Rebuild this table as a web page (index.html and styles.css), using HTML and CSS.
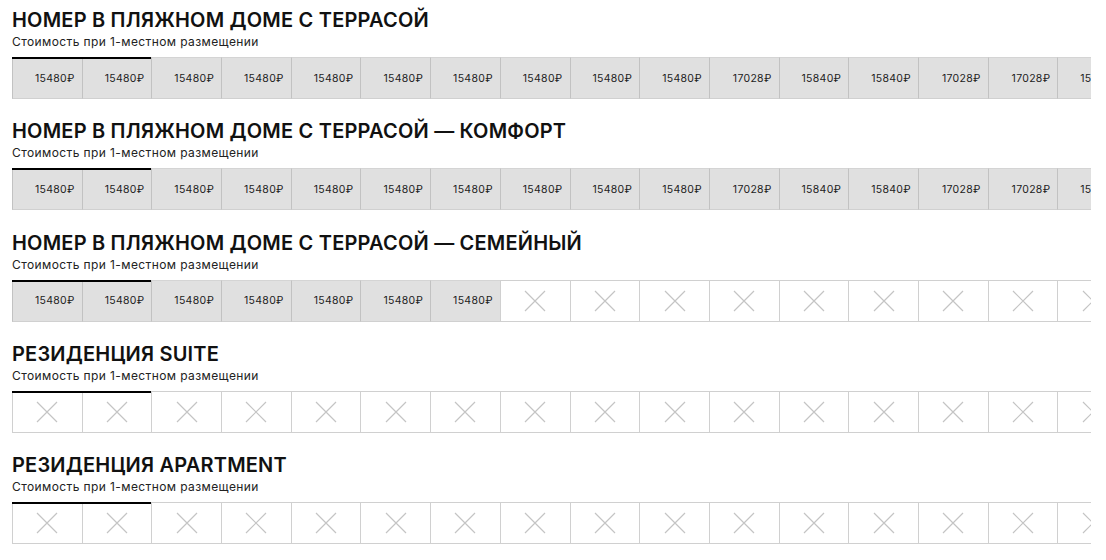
FILE: index.html
```html
<!DOCTYPE html>
<html lang="ru">
<head>
<meta charset="utf-8">
<title>Цены</title>
<link rel="stylesheet" href="styles.css">
</head>
<body>
<div id="app"></div>
<script src="app.js"></script>
</body>
</html>
```
FILE: app.js
```js
const P1 = ["15480","15480","15480","15480","15480","15480","15480","15480","15480","15480","17028","15840","15840","17028","17028","15480"];
const P3 = ["15480","15480","15480","15480","15480","15480","15480"];
const rooms = [
  {t:"НОМЕР В ПЛЯЖНОМ ДОМЕ С ТЕРРАСОЙ", p:P1},
  {t:"НОМЕР В ПЛЯЖНОМ ДОМЕ С ТЕРРАСОЙ — КОМФОРТ", p:P1},
  {t:"НОМЕР В ПЛЯЖНОМ ДОМЕ С ТЕРРАСОЙ — СЕМЕЙНЫЙ", p:P3},
  {t:"РЕЗИДЕНЦИЯ SUITE", p:[]},
  {t:"РЕЗИДЕНЦИЯ APARTMENT", p:[]}
];
const X = '<svg class="x" viewBox="0 0 22 22" width="22" height="22"><path d="M1 1L21 21M21 1L1 21" stroke="#c4c4c4" stroke-width="1.2" fill="none"/></svg>';
const app = document.getElementById("app");
app.innerHTML = rooms.map(r => {
  let cells = "";
  for (let i = 0; i < 16; i++) {
    const cls = "cell" + (i < 2 ? " active" : "") + (r.p[i] ? " priced" : "");
    cells += '<div class="' + cls + '">' + (r.p[i] ? '<span class="price">' + r.p[i] + '₽</span>' : X) + '</div>';
  }
  return '<section class="room"><h2 class="title">' + r.t + '</h2><p class="sub">Стоимость при 1-местном размещении</p><div class="strip"><div class="row">' + cells + '</div></div></section>';
}).join("");
```
FILE: styles.css
```css
html, body { margin: 0; padding: 0; background: #fff; }
body {
  padding: 8px 15px 0 12px;
  font-family: Inter, "Noto Sans", sans-serif;
  color: #111;
  overflow: hidden;
}
.room { margin-bottom: 20.3px; }
.title {
  margin: 0;
  font-size: 20px;
  line-height: 24px;
  font-weight: 600;
  letter-spacing: 0.2px;
}
.sub {
  margin: 2px 0 0;
  font-size: 12px;
  line-height: 16px;
  letter-spacing: 0.4px;
  color: #222;
}
.strip {
  margin-top: 7px;
  width: 1079px;
  overflow: hidden;
}
.row { display: flex; width: max-content; }
.cell {
  position: relative;
  flex: 0 0 69.7px;
  box-sizing: border-box;
  height: 42px;
  border-top: 1px solid #d0d0d0;
  border-bottom: 1px solid #d0d0d0;
  border-left: 1px solid #d0d0d0;
  display: flex;
  align-items: center;
  justify-content: center;
}
.cell.priced {
  background: #e0e0e0;
  border-left-color: #c2c2c2;
  border-top-color: #d4d4d4;
  border-bottom-color: #d0d0d0;
  justify-content: flex-end;
  padding-right: 7px;
}
.cell.active::before {
  content: "";
  position: absolute;
  left: -1px;
  right: 0;
  top: -2px;
  height: 3px;
  background: #000;
}
.price {
  font-size: 10.5px;
  letter-spacing: 0.3px;
  color: #222;
}
.x { display: block; }
```
